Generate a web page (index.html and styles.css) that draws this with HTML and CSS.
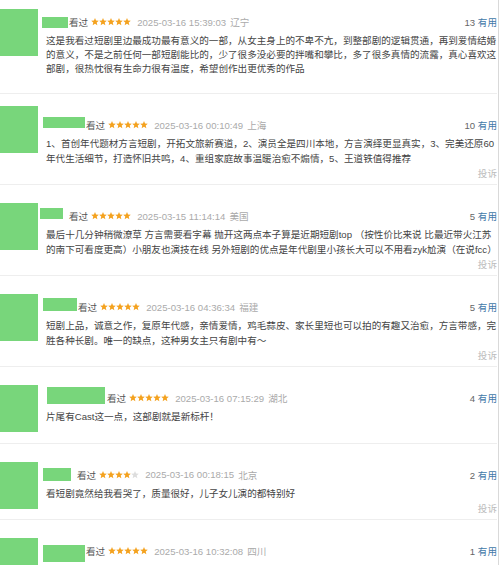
FILE: index.html
```html
<!DOCTYPE html>
<html lang="zh-CN">
<head>
    <meta charset="UTF-8">
    <meta name="viewport" content="width=device-width, initial-scale=1.0">
    <title>短评</title>
    <link rel="stylesheet" href="styles.css">
</head>
<body>
    <svg class="sprite" aria-hidden="true">
        <symbol id="star" viewBox="0 0 8 8">
            <polygon points="4,0 5.06,2.54 7.8,2.76 5.71,4.55 6.35,7.24 4,5.8 1.65,7.24 2.29,4.55 0.2,2.76 2.94,2.54" fill="currentColor"/>
        </symbol>
    </svg>

    <div class="comments">
        <div class="comment first">
            <div class="avatar"></div>
            <div class="comment-body">
                <div class="comment-info">
                    <span class="mask mask-1"></span>
                    <span class="watched">看过</span>
                    <svg class="stars" width="40" height="8" viewBox="0 0 40 8"><use href="#star" x="0" width="8" height="8"/><use href="#star" x="8" width="8" height="8"/><use href="#star" x="16" width="8" height="8"/><use href="#star" x="24" width="8" height="8"/><use href="#star" x="32" width="8" height="8"/></svg>
                    <span class="time">2025-03-16 15:39:03</span>
                    <span class="loc">辽宁</span>
                    <span class="votes"><span class="count">13</span> <span class="useful">有用</span></span>
                </div>
                <p class="comment-text">这是我看过短剧里边最成功最有意义的一部，从女主身上的不卑不亢，到整部剧的逻辑贯通，再到爱情结婚的意义，不是之前任何一部短剧能比的，少了很多没必要的拌嘴和攀比，多了很多真情的流露，真心喜欢这部剧，很热忱很有生命力很有温度，希望创作出更优秀的作品</p>
                <div class="comment-foot"><span class="report hidden">投诉</span></div>
            </div>
        </div>

        <div class="comment">
            <div class="avatar avatar-high"></div>
            <div class="comment-body">
                <div class="comment-info">
                    <span class="mask mask-2"></span>
                    <span class="watched">看过</span>
                    <svg class="stars" width="40" height="8" viewBox="0 0 40 8"><use href="#star" x="0" width="8" height="8"/><use href="#star" x="8" width="8" height="8"/><use href="#star" x="16" width="8" height="8"/><use href="#star" x="24" width="8" height="8"/><use href="#star" x="32" width="8" height="8"/></svg>
                    <span class="time">2025-03-16 00:10:49</span>
                    <span class="loc">上海</span>
                    <span class="votes"><span class="count">10</span> <span class="useful">有用</span></span>
                </div>
                <p class="comment-text">1、首创年代题材方言短剧，开拓文旅新赛道，2、演员全是四川本地，方言演绎更显真实，3、完美还原60年代生活细节，打造怀旧共鸣，4、重组家庭故事温暖治愈不煽情，5、王道铁值得推荐</p>
                <div class="comment-foot"><span class="report">投诉</span></div>
            </div>
        </div>

        <div class="comment">
            <div class="avatar"></div>
            <div class="comment-body">
                <div class="comment-info">
                    <span class="mask mask-3"></span>
                    <span class="watched">看过</span>
                    <svg class="stars" width="40" height="8" viewBox="0 0 40 8"><use href="#star" x="0" width="8" height="8"/><use href="#star" x="8" width="8" height="8"/><use href="#star" x="16" width="8" height="8"/><use href="#star" x="24" width="8" height="8"/><use href="#star" x="32" width="8" height="8"/></svg>
                    <span class="time">2025-03-15 11:14:14</span>
                    <span class="loc">美国</span>
                    <span class="votes"><span class="count">5</span> <span class="useful">有用</span></span>
                </div>
                <p class="comment-text">最后十几分钟稍微潦草 方言需要看字幕 抛开这两点本子算是近期短剧top （按性价比来说 比最近带火江苏的南下可看度更高）小朋友也演技在线 另外短剧的优点是年代剧里小孩长大可以不用看zyk尬演（在说fcc）</p>
                <div class="comment-foot"><span class="report">投诉</span></div>
            </div>
        </div>

        <div class="comment">
            <div class="avatar"></div>
            <div class="comment-body">
                <div class="comment-info">
                    <span class="mask mask-4"></span>
                    <span class="watched">看过</span>
                    <svg class="stars" width="40" height="8" viewBox="0 0 40 8"><use href="#star" x="0" width="8" height="8"/><use href="#star" x="8" width="8" height="8"/><use href="#star" x="16" width="8" height="8"/><use href="#star" x="24" width="8" height="8"/><use href="#star" x="32" width="8" height="8"/></svg>
                    <span class="time">2025-03-16 04:36:34</span>
                    <span class="loc">福建</span>
                    <span class="votes"><span class="count">5</span> <span class="useful">有用</span></span>
                </div>
                <p class="comment-text">短剧上品，诚意之作，复原年代感，亲情爱情，鸡毛蒜皮、家长里短也可以拍的有趣又治愈，方言带感，完胜各种长剧。唯一的缺点，这种男女主只有剧中有～</p>
                <div class="comment-foot"><span class="report">投诉</span></div>
            </div>
        </div>

        <div class="comment">
            <div class="avatar"></div>
            <div class="comment-body">
                <div class="comment-info">
                    <span class="mask mask-5"></span>
                    <span class="watched">看过</span>
                    <svg class="stars" width="40" height="8" viewBox="0 0 40 8"><use href="#star" x="0" width="8" height="8"/><use href="#star" x="8" width="8" height="8"/><use href="#star" x="16" width="8" height="8"/><use href="#star" x="24" width="8" height="8"/><use href="#star" x="32" width="8" height="8"/></svg>
                    <span class="time">2025-03-16 07:15:29</span>
                    <span class="loc">湖北</span>
                    <span class="votes"><span class="count">4</span> <span class="useful">有用</span></span>
                </div>
                <p class="comment-text">片尾有Cast这一点，这部剧就是新标杆！</p>
                <div class="comment-foot"><span class="report hidden">投诉</span></div>
            </div>
        </div>

        <div class="comment">
            <div class="avatar"></div>
            <div class="comment-body">
                <div class="comment-info">
                    <span class="mask mask-6"></span>
                    <span class="watched">看过</span>
                    <svg class="stars" width="40" height="8" viewBox="0 0 40 8"><use href="#star" x="0" width="8" height="8"/><use href="#star" x="8" width="8" height="8"/><use href="#star" x="16" width="8" height="8"/><use href="#star" x="24" width="8" height="8"/><use class="off" href="#star" x="32" width="8" height="8"/></svg>
                    <span class="time">2025-03-16 00:18:15</span>
                    <span class="loc">北京</span>
                    <span class="votes"><span class="count">2</span> <span class="useful">有用</span></span>
                </div>
                <p class="comment-text">看短剧竟然给我看哭了，质量很好，儿子女儿演的都特别好</p>
                <div class="comment-foot"><span class="report">投诉</span></div>
            </div>
        </div>

        <div class="comment">
            <div class="avatar"></div>
            <div class="comment-body">
                <div class="comment-info">
                    <span class="mask mask-7"></span>
                    <span class="watched">看过</span>
                    <svg class="stars" width="40" height="8" viewBox="0 0 40 8"><use href="#star" x="0" width="8" height="8"/><use href="#star" x="8" width="8" height="8"/><use href="#star" x="16" width="8" height="8"/><use href="#star" x="24" width="8" height="8"/><use href="#star" x="32" width="8" height="8"/></svg>
                    <span class="time">2025-03-16 10:32:08</span>
                    <span class="loc">四川</span>
                    <span class="votes"><span class="count">1</span> <span class="useful">有用</span></span>
                </div>
            </div>
        </div>
    </div>
</body>
</html>
```

FILE: styles.css
```css
html, body {
    margin: 0;
    padding: 0;
    overflow: hidden;
    background-color: #fff;
}
body {
    font-family: "Liberation Sans", Arial, "Noto Sans CJK SC", sans-serif;
    font-size: 9.58px;
    color: #444;
}
.sprite {
    display: block;
    width: 0;
    height: 0;
}
.comments {
    width: 498px;
    border-right: 1px solid #d9d9d9;
    overflow: hidden;
}
.comment {
    display: flex;
    width: 497px;
    padding: 23px 0 3px;
    border-bottom: 1px solid #eeeeee;
}
.comment.first {
    padding-top: 14px;
    padding-bottom: 2px;
}
.first .comment-text {
    line-height: 14px;
}
.avatar {
    flex: none;
    width: 38px;
    height: 47px;
    margin: -5px 8px 0 0;
    background-color: #78d67b;
}
.avatar-high {
    margin-top: -11px;
}
.comment-body {
    flex: 1;
    min-width: 0;
}
.comment-info {
    display: flex;
    align-items: center;
    height: 16px;
    white-space: nowrap;
}
.mask {
    flex: none;
    height: 11px;
    background-color: #78d67b;
}
.mask-1 { width: 26px; margin-left: -4px; margin-right: 1px; }
.mask-2 { width: 42px; margin-left: -3px; margin-right: 1px; margin-bottom: 5px; }
.mask-3 { width: 23px; margin-left: -6px; margin-right: 6px; margin-bottom: 5px; }
.mask-4 { width: 34px; height: 13px; margin-left: -3px; margin-right: 1px; margin-bottom: 5px; }
.mask-5 { width: 58px; height: 17px; margin-left: 1px; margin-right: 2px; margin-bottom: 5px; }
.mask-6 { width: 28px; height: 13px; margin-left: -3px; margin-right: 6px; }
.mask-7 { width: 42px; height: 17px; margin-left: -3px; margin-right: 1px; margin-top: 5px; }
.watched {
    color: #555;
    margin-right: 3px;
}
.stars {
    flex: none;
    margin-right: 6px;
    color: #f4a21f;
}
.stars .off {
    color: #dddddd;
}
.time, .loc {
    color: #aaaaaa;
}
.loc {
    margin-left: 4px;
}
.votes {
    margin-left: auto;
    color: #666;
}
.useful {
    color: #3f79a8;
}
.comment-text {
    margin: 4px 0 0;
    line-height: 14.5px;
}
.comment-foot {
    margin-top: 1px;
    line-height: 14px;
    text-align: right;
}
.report {
    color: #bbbbbb;
}
.report.hidden {
    visibility: hidden;
}
```
